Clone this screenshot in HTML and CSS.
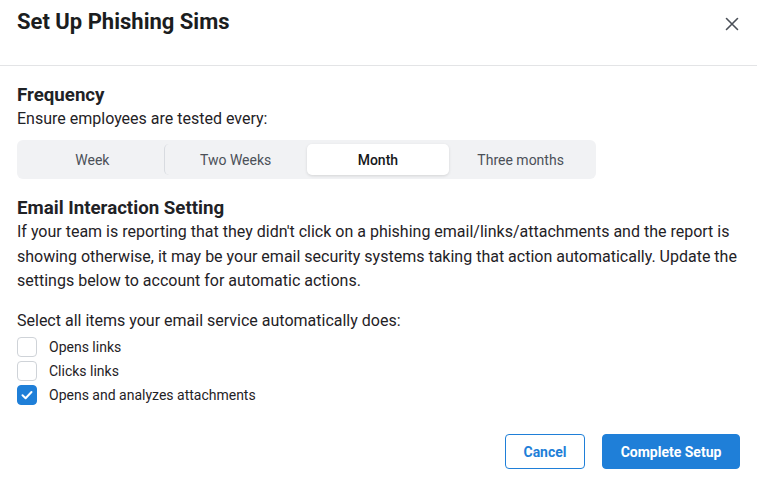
FILE: index.html
```html
<!DOCTYPE html>
<html>
<head>
<meta charset="utf-8">
<link rel="stylesheet" href="styles.css">
</head>
<body>
<div class="dialog">
  <header class="header">
    <h1 class="title">Set Up Phishing Sims</h1>
    <button class="close" aria-label="Close">
      <svg width="14" height="14" viewBox="0 0 14 14"><path d="M1.5 1.5 L12.5 12.5 M12.5 1.5 L1.5 12.5" stroke="#4b5058" stroke-width="1.6" stroke-linecap="round" fill="none"/></svg>
    </button>
  </header>
  <main class="body">
    <h2 class="heading">Frequency</h2>
    <p class="sub">Ensure employees are tested every:</p>
    <div class="segmented">
      <div class="seg">Week</div>
      <div class="seg sep">Two Weeks</div>
      <div class="seg active">Month</div>
      <div class="seg">Three months</div>
    </div>
    <h2 class="heading h2b">Email Interaction Setting</h2>
    <p class="para">If your team is reporting that they didn't click on a phishing email/links/attachments and the report is showing otherwise, it may be your email security systems taking that action automatically. Update the settings below to account for automatic actions.</p>
    <p class="para select">Select all items your email service automatically does:</p>
    <ul class="checks">
      <li class="check"><span class="box"></span><span>Opens links</span></li>
      <li class="check"><span class="box"></span><span>Clicks links</span></li>
      <li class="check"><span class="box on"><svg width="14" height="14" viewBox="0 0 14 14"><path d="M2.5 7.3 L5.6 10.2 L11.5 4" stroke="#fff" stroke-width="2" fill="none" stroke-linecap="round" stroke-linejoin="round"/></svg></span><span>Opens and analyzes attachments</span></li>
    </ul>
  </main>
  <footer class="footer">
    <button class="btn outline">Cancel</button>
    <button class="btn primary">Complete Setup</button>
  </footer>
</div>
</body>
</html>
```
FILE: styles.css
```css
* { box-sizing: border-box; }
html, body { margin: 0; padding: 0; background: #fff; }
body {
  font-family: Roboto, "Liberation Sans", sans-serif;
  color: #1f2226;
  width: 757px;
  height: 477px;
  overflow: hidden;
}
.dialog { display: flex; flex-direction: column; height: 477px; }
.header {
  height: 66px;
  border-bottom: 1px solid #e3e4e6;
  display: flex;
  justify-content: space-between;
  align-items: flex-start;
  padding: 8px 17px 0 17px;
}
.title {
  margin: 0;
  font-size: 22px;
  font-weight: 700;
  line-height: 28px;
  color: #1b1d20;
}
.close {
  border: 0;
  background: transparent;
  padding: 0;
  margin-top: 9px;
  margin-right: 1px;
  width: 14px;
  height: 14px;
  display: flex;
}
.body { padding: 17px 17px 0 17px; flex: 1; }
.heading {
  margin: 0;
  font-size: 18.7px;
  font-weight: 700;
  line-height: 24px;
  color: #1f2226;
}
.h2b { margin-top: 17px; }
.sub, .para {
  margin: 0;
  font-size: 16px;
  line-height: 24px;
  color: #1f2226;
}
.para { line-height: 24.5px; }
.select { margin-top: 15px; }
.segmented {
  margin-top: 9px;
  width: 579px;
  height: 39px;
  background: #f1f2f4;
  border-radius: 6px;
  padding: 4px;
  display: grid;
  grid-template-columns: repeat(4, 1fr);
}
.seg {
  display: flex;
  align-items: center;
  justify-content: center;
  font-size: 14px;
  color: #4b5058;
  border-radius: 5px;
}
.seg.sep { border-left: 1px solid #d8dbe0; }
.seg.active {
  background: #fff;
  color: #16181b;
  font-weight: 500;
  box-shadow: 0 1px 3px rgba(0,0,0,0.12);
}
.checks { list-style: none; margin: 4px 0 0 0; padding: 0; display: flex; flex-direction: column; gap: 4px; }
.check { display: flex; align-items: center; gap: 12px; font-size: 14px; line-height: 20px; color: #1f2226; }
.box {
  width: 20px; height: 20px;
  border: 1px solid #cfd3d8;
  border-radius: 4px;
  display: flex; align-items: center; justify-content: center;
  background: #fff;
}
.box.on { background: #1f7fd8; border-color: #1f7fd8; }
.footer {
  display: flex;
  justify-content: flex-end;
  gap: 17px;
  padding: 0 17px 8px 17px;
}
.btn {
  height: 35px;
  border-radius: 4px;
  font-family: Roboto, "Liberation Sans", sans-serif;
  font-size: 14px;
  font-weight: 700;
  padding: 0;
  white-space: nowrap;
  cursor: pointer;
}
.outline { width: 80px; background: #fff; border: 1px solid #1f7fd8; color: #1f7fd8; }
.primary { width: 138px; background: #1f7fd8; border: 1px solid #1f7fd8; color: #fff; }
```
